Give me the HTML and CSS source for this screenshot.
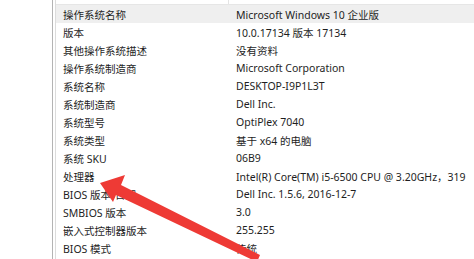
FILE: index.html
```html
<!DOCTYPE html>
<html lang="zh-CN">

<head>
    <meta charset="UTF-8">
    <meta name="viewport" content="width=device-width, initial-scale=1.0">
    <title>系统信息</title>
    <link rel="stylesheet" href="styles.css">
</head>

<body>
    <main class="panel">
        <div class="inner">
            <div class="head">
                <div class="head-col"></div>
                <div></div>
            </div>
            <ul class="rows">
                <li class="active"><span class="name">操作系统名称</span><span class="value">Microsoft Windows 10 企业版</span></li>
                <li><span class="name">版本</span><span class="value">10.0.17134 版本 17134</span></li>
                <li><span class="name">其他操作系统描述</span><span class="value">没有资料</span></li>
                <li><span class="name">操作系统制造商</span><span class="value">Microsoft Corporation</span></li>
                <li><span class="name">系统名称</span><span class="value">DESKTOP-I9P1L3T</span></li>
                <li><span class="name">系统制造商</span><span class="value">Dell Inc.</span></li>
                <li><span class="name">系统型号</span><span class="value">OptiPlex 7040</span></li>
                <li><span class="name">系统类型</span><span class="value">基于 x64 的电脑</span></li>
                <li><span class="name">系统 SKU</span><span class="value">06B9</span></li>
                <li><span class="name">处理器</span><span class="value">Intel(R) Core(TM) i5-6500 CPU @ 3.20GHz，319</span></li>
                <li><span class="name">BIOS 版本/日期</span><span class="value">Dell Inc. 1.5.6, 2016-12-7</span></li>
                <li><span class="name">SMBIOS 版本</span><span class="value">3.0</span></li>
                <li><span class="name">嵌入式控制器版本</span><span class="value">255.255</span></li>
                <li><span class="name">BIOS 模式</span><span class="value">传统</span></li>
            </ul>
        </div>
    </main>
    <!-- 红色箭头指向处理器 -->
    <svg class="arrow" width="474" height="259" viewBox="0 0 474 259">
        <polygon points="100,183 125,175 121,185 260,255 257,262 116,195 113,202" fill="#ee3a35" />
    </svg>
</body>

</html>
```

FILE: styles.css
```css
* {
    margin: 0;
    padding: 0;
    box-sizing: border-box;
    list-style: none;
}

html,
body {
    width: 100%;
    height: 100%;
    background-color: #ffffff;
    overflow: hidden;
}

body {
    font-family: "Noto Sans", "Noto Sans CJK SC", sans-serif;
    font-size: 10.5px;
    color: #1e1e1e;
}

.panel {
    margin-left: 52px;
    height: 100%;
    border-left: 1px solid #b4b4b4;
    padding-left: 2px;
}

.inner {
    height: 100%;
    border-left: 1px solid #dcdcdc;
}

.head {
    display: flex;
    height: 5px;
    border-bottom: 1px solid #e6e6e6;
}

.head-col {
    width: 173px;
    border-right: 1px solid #e4e4e4;
}

.rows li {
    display: flex;
    align-items: center;
    height: 18px;
    white-space: nowrap;
}

.rows li.active {
    background-color: #efefef;
}

.name {
    width: 180px;
    flex-shrink: 0;
    padding-left: 7px;
}

.value {
    flex-shrink: 0;
}

.arrow {
    position: absolute;
    left: 0;
    top: 0;
}
```
